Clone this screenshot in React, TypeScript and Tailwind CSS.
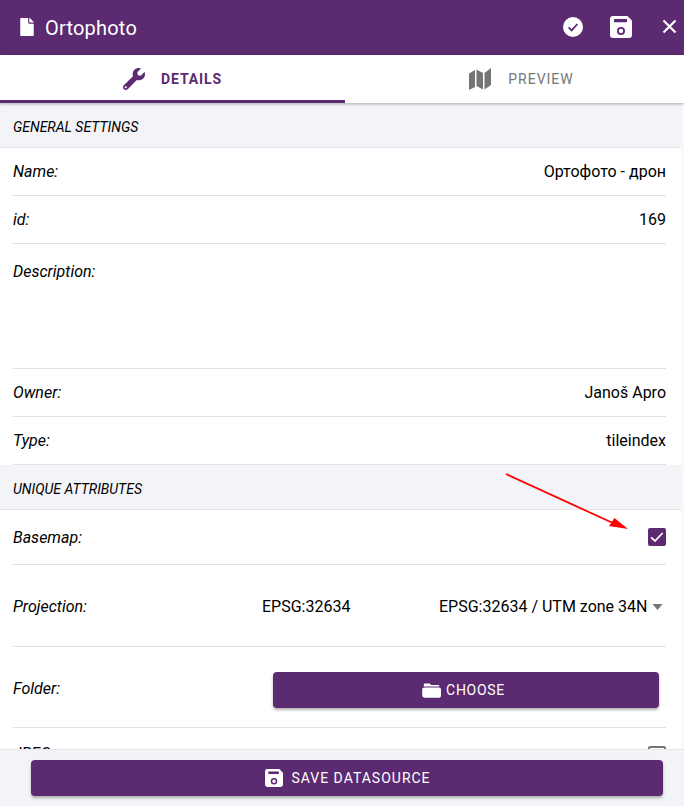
import React from 'react';
import { FaFile, FaWrench } from 'react-icons/fa';

const SaveIcon = ({ className, hole }: { className: string; hole: string }) => (
  <svg viewBox="0 0 22 22" className={className}>
    <path d="M3 0h14.5L22 4.5V19a3 3 0 0 1-3 3H3a3 3 0 0 1-3-3V3a3 3 0 0 1 3-3z" fill="currentColor" />
    <rect x="4" y="3" width="13" height="3.2" rx="0.6" fill={hole} />
    <circle cx="11" cy="15" r="3.1" fill="none" stroke={hole} strokeWidth="1.8" />
  </svg>
);

const Section = ({ title }: { title: string }) => (
  <div className="h-[45px] bg-[#f3f4f8] border-b border-[#e4e4ea] pl-[13px] pt-[5px] flex items-center italic text-[14px] text-black">
    {title}
  </div>
);

const Row = ({ label, value }: { label: string; value: string }) => (
  <div className="ml-[13px] mr-[15px] h-[48px] border-b border-[#e2e2e6] flex items-center justify-between text-[16px] text-black">
    <span className="italic">{label}</span>
    <span>{value}</span>
  </div>
);

export default function App() {
  return (
    <div className="relative h-[806px] w-[684px] overflow-hidden flex flex-col bg-white font-['Roboto',sans-serif]">
      <header className="h-[55px] shrink-0 bg-[#5c2a70] flex items-center text-white">
        <FaFile className="w-[14px] h-[18px] ml-[20px] mt-[-1px]" />
        <span className="ml-[11px] text-[20px] tracking-[0.2px]">Ortophoto</span>
        <div className="ml-auto flex items-center">
          <svg viewBox="0 0 20 20" className="w-[20px] h-[20px] mr-[27px] mt-[-2px]">
            <circle cx="10" cy="10" r="10" fill="currentColor" />
            <path d="M5.6 10.4l3 3 5.8-6.4" fill="none" stroke="#5c2a70" strokeWidth="1.7" />
          </svg>
          <SaveIcon className="w-[22px] h-[22px] mr-[30px] mt-[-2px]" hole="#5c2a70" />
          <svg viewBox="0 0 15 15" className="w-[15px] h-[15px] mr-[7px] mt-[-2px]">
            <path d="M1.5 1.5l12 12M13.5 1.5l-12 12" fill="none" stroke="currentColor" strokeWidth="2.2" />
          </svg>
        </div>
      </header>

      <nav className="h-[48px] shrink-0 flex relative z-10 shadow-[0_1px_3px_rgba(0,0,0,0.3)] bg-white">
        <div className="w-[345px] relative flex items-center justify-center gap-[16px] text-[#5c2a70]">
          <FaWrench className="w-[22px] h-[22px]" />
          <span className="text-[14px] font-bold tracking-[0.9px]">DETAILS</span>
          <div className="absolute left-0 right-0 bottom-0 h-[3px] bg-[#5c2a70]" />
        </div>
        <div className="flex-1 pl-[14px] flex items-center justify-center gap-[17px] text-[#757575]">
          <svg viewBox="0 0 22 22" className="w-[22px] h-[22px]">
            <path d="M0 5.5L6 2v17l-6 3zM7.5 1.5L14 5v16.5l-6.5-3.5zM15.5 5L22 0v17l-6.5 4.5z" fill="currentColor" />
          </svg>
          <span className="text-[14px] tracking-[1px]">PREVIEW</span>
        </div>
      </nav>

      <div className="flex-1 min-h-0 flex">
        <main className="flex-1 min-w-0 overflow-hidden text-black">
          <Section title="GENERAL SETTINGS" />
          <Row label="Name:" value="Ортофото - дрон" />
          <Row label="id:" value="169" />
          <div className="ml-[13px] mr-[15px] h-[125px] border-b border-[#e2e2e6] pt-[19px] text-[16px] italic leading-[18px]">
            Description:
          </div>
          <Row label="Owner:" value="Janoš Apro" />
          <Row label="Type:" value="tileindex" />
          <Section title="UNIQUE ATTRIBUTES" />
          <div className="ml-[13px] mr-[15px] h-[55px] border-b border-[#e2e2e6] flex items-center justify-between text-[16px]">
            <span className="italic mt-[2px]">Basemap:</span>
            <span className="w-[18px] h-[18px] rounded-[2px] bg-[#5c2a70] flex items-center justify-center text-white">
              <svg viewBox="0 0 18 18" className="w-[18px] h-[18px]">
                <path d="M3.2 9.4l3.8 3.6 7.6-8" fill="none" stroke="currentColor" strokeWidth="1.8" />
              </svg>
            </span>
          </div>
          <div className="ml-[13px] mr-[15px] h-[82px] pt-[2px] border-b border-[#e2e2e6] flex items-center text-[16px]">
            <span className="italic w-[249px]">Projection:</span>
            <span className="w-[177px]">EPSG:32634</span>
            <span>EPSG:32634 / UTM zone 34N</span>
            <svg viewBox="0 0 13 6" className="w-[13px] h-[6px] ml-[4px]">
              <path d="M1.5 0h10L6.5 6z" fill="#757575" />
            </svg>
          </div>
          <div className="ml-[13px] mr-[15px] h-[81px] border-b border-[#e2e2e6] flex items-center text-[16px]">
            <span className="italic w-[260px] mt-[4px]">Folder:</span>
            <button className="w-[386px] h-[36px] mt-[6px] pr-[5px] rounded-[4px] bg-[#5c2a70] text-white flex items-center justify-center gap-[5px] text-[14px] tracking-[0.7px] shadow-[0_2px_3px_rgba(0,0,0,0.3)]">
              <svg viewBox="0 0 19 16" className="w-[19px] h-[16px]">
                <path d="M2.5 1.5h5l1.8 1.6H16a1.5 1.5 0 0 1 1.5 1.4H1.8V2.2a.8.8 0 0 1 .7-.7z" fill="currentColor" />
                <path d="M2.5 5.5h14A2.2 2.2 0 0 1 19 7.8v5.4a2.6 2.6 0 0 1-2.6 2.6H3A2.8 2.8 0 0 1 .2 13V7.8A2.2 2.2 0 0 1 2.5 5.5z" fill="currentColor" />
              </svg>
              CHOOSE
            </button>
          </div>
          <div className="ml-[13px] mr-[15px] h-[48px] pt-[6px] flex items-center justify-between text-[16px]">
            <span className="italic -mt-[2px]">JPEG:</span>
            <span className="w-[18px] h-[18px] rounded-[2px] border-2 border-[#757575]" />
          </div>
        </main>
        <div className="w-[3px] shrink-0 bg-[#f8f8f8]" />
      </div>

      <footer className="h-[57px] shrink-0 bg-[#f3f4f8] border-t border-[#e4e4ea] relative z-10 pl-[31px] pr-[21px] pt-[10px]">
        <button className="w-full h-[36px] rounded-[4px] bg-[#5c2a70] text-white flex items-center justify-center gap-[8px] text-[14px] tracking-[1px] shadow-[0_2px_3px_rgba(0,0,0,0.3)]">
          <SaveIcon className="w-[18px] h-[18px] ml-[2px]" hole="#5c2a70" />
          SAVE DATASOURCE
        </button>
      </footer>

      <svg className="absolute left-0 top-0 pointer-events-none z-20" width="684" height="806">
        <line x1="506" y1="474" x2="615" y2="524" stroke="#ff0000" strokeWidth="1.8" />
        <polygon points="628,529 609,526 614.5,518" fill="#ff0000" />
      </svg>
    </div>
  );
}
